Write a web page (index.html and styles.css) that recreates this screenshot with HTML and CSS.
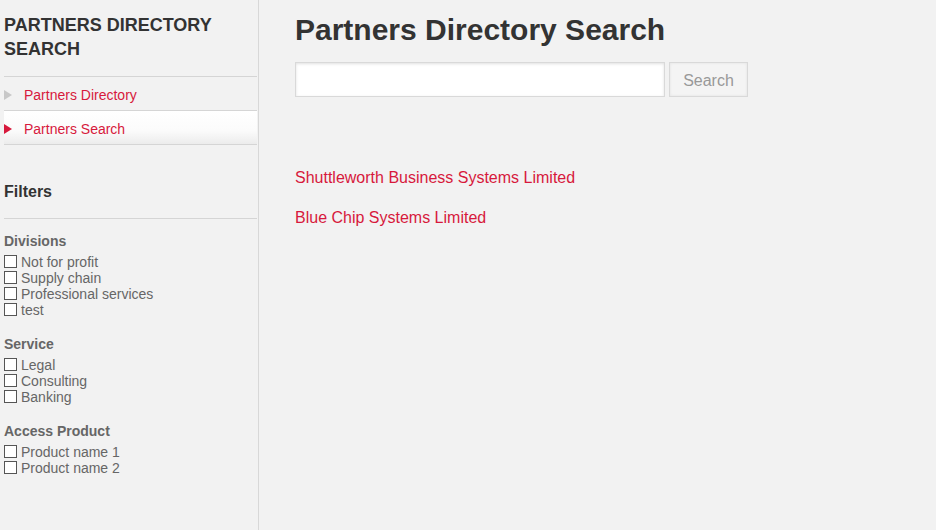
FILE: index.html
```html
<!DOCTYPE html>
<html>
<head>
<meta charset="utf-8">
<link rel="stylesheet" href="styles.css">
</head>
<body>
<div class="page">
  <aside class="sidebar">
    <div class="site-title">PARTNERS DIRECTORY SEARCH</div>
    <ul class="nav">
      <li class="nav-item"><span class="arrow"></span><a href="#">Partners Directory</a></li>
      <li class="nav-item active"><span class="arrow"></span><a href="#">Partners Search</a></li>
    </ul>
    <h2 class="filters-title">Filters</h2>
    <div class="filter-group">
      <h3>Divisions</h3>
      <label><input type="checkbox">Not for profit</label>
      <label><input type="checkbox">Supply chain</label>
      <label><input type="checkbox">Professional services</label>
      <label><input type="checkbox">test</label>
    </div>
    <div class="filter-group">
      <h3>Service</h3>
      <label><input type="checkbox">Legal</label>
      <label><input type="checkbox">Consulting</label>
      <label><input type="checkbox">Banking</label>
    </div>
    <div class="filter-group">
      <h3>Access Product</h3>
      <label><input type="checkbox">Product name 1</label>
      <label><input type="checkbox">Product name 2</label>
    </div>
  </aside>
  <main class="main">
    <h1>Partners Directory Search</h1>
    <form class="search">
      <input type="text" class="search-input">
      <button type="button" class="search-btn">Search</button>
    </form>
    <ul class="results">
      <li><a href="#">Shuttleworth Business Systems Limited</a></li>
      <li><a href="#">Blue Chip Systems Limited</a></li>
    </ul>
  </main>
</div>
</body>
</html>
```
FILE: styles.css
```css
* { box-sizing: border-box; }
html, body { margin: 0; padding: 0; height: 100%; }
body {
  background: #f2f2f2;
  font-family: "Liberation Sans", Arial, sans-serif;
  color: #333;
}
.page {
  display: flex;
  min-height: 530px;
}
.sidebar {
  width: 259px;
  flex: 0 0 259px;
  border-right: 1px solid #d8d8d8;
  padding: 13px 1px 0 4px;
}
.site-title {
  font-size: 18px;
  font-weight: bold;
  line-height: 24px;
  color: #333;
  margin-bottom: 15px;
}
.nav {
  list-style: none;
  margin: 0;
  padding: 0;
  border-top: 1px solid #d5d5d5;
}
.nav-item {
  height: 34px;
  border-bottom: 1px solid #d5d5d5;
  display: flex;
  align-items: center;
  padding-top: 2px;
  font-size: 14px;
}
.nav-item.active {
  background: linear-gradient(to bottom, #ffffff 0%, #fbfbfb 60%, #ececec 100%);
}
.arrow {
  width: 0;
  height: 0;
  border-top: 5px solid transparent;
  border-bottom: 5px solid transparent;
  border-left: 8px solid #c8c8c8;
  margin-right: 12px;
}
.active .arrow { border-left-color: #d7193c; }
.nav a {
  color: #d7193c;
  text-decoration: none;
}
.filters-title {
  font-size: 16px;
  font-weight: bold;
  margin: 38px 0 0;
  padding-bottom: 17px;
  border-bottom: 1px solid #d5d5d5;
  color: #333;
}
.filter-group {
  margin-top: 14px;
}
.filter-group + .filter-group { margin-top: 18px; }
.filter-group h3 {
  font-size: 14px;
  font-weight: bold;
  color: #666;
  margin: 0 0 5px;
  line-height: 16px;
}
.filter-group label {
  display: flex;
  align-items: center;
  font-size: 14px;
  line-height: 16px;
  color: #666;
}
.filter-group input {
  margin: 0 4px 0 0;
  width: 13px;
  height: 13px;
  appearance: none;
  -webkit-appearance: none;
  border: 1px solid #555;
  background: #fff;
  position: relative;
  top: -1px;
}
.main {
  flex: 1;
  padding: 13px 0 0 36px;
}
.main h1 {
  font-size: 30px;
  font-weight: bold;
  margin: 0;
  line-height: 34px;
  color: #333;
}
.search {
  display: flex;
  margin-top: 15px;
  gap: 4px;
}
.search-input {
  width: 370px;
  height: 35px;
  border: 1px solid #d9d9d9;
  background: #fff;
  box-shadow: inset 0 1px 3px rgba(0,0,0,0.12);
  margin: 0;
}
.search-btn {
  width: 79px;
  height: 35px;
  border: 1px solid #d9d9d9;
  background: #f4f4f4;
  box-shadow: inset 0 0 3px rgba(0,0,0,0.08);
  font-family: "Liberation Sans", Arial, sans-serif;
  font-size: 16px;
  color: #999;
  padding: 2px 0 0;
  margin: 0;
}
.results {
  list-style: none;
  margin: 71px 0 0;
  padding: 0;
}
.results li {
  font-size: 16px;
  line-height: 20px;
  margin-bottom: 20px;
}
.results a {
  color: #d7193c;
  text-decoration: none;
}
```
